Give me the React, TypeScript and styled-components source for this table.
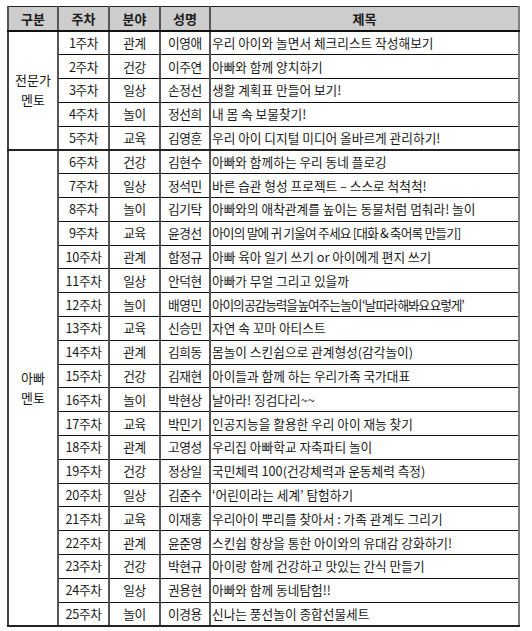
import React from 'react'
import styled, { createGlobalStyle } from 'styled-components'

const GlobalStyle = createGlobalStyle`
  html, body {
    margin: 0;
    padding: 0;
    background: #ffffff;
  }
  body {
    font-family: "Noto Sans CJK KR", "Noto Sans", sans-serif;
    color: #1a1a1a;
  }
`

const Page = styled.div`
  padding: 6px 0 0 7px;
`

const Table = styled.table`
  width: 513px;
  border-collapse: collapse;
  table-layout: fixed;
  font-size: 12.7px;
  border-top: 1px solid #222;
  border-bottom: 2px solid #222;
  border-left: 2px solid #444;
  border-right: 2px solid #808080;
`

const HeadCell = styled.th`
  height: 23px;
  padding: 0;
  background: #cdcdcd;
  font-weight: 700;
  font-size: 13px;
  text-align: center;
  border-bottom: 2px solid #111;
  border-left: 2px solid #555;
  color: #1a1a1a;
`

const Row = styled.tr<{ $groupEnd?: boolean }>`
  height: 23.8px;
  td {
    border-bottom: ${(p) => (p.$groupEnd ? '2px solid #222' : '1px solid #111')};
  }
`

const Cell = styled.td<{ $left?: boolean }>`
  padding: ${(p) => (p.$left ? '0 0 0 1px' : '0')};
  text-align: ${(p) => (p.$left ? 'left' : 'center')};
  border-left: 2px solid #555;
  white-space: nowrap;
  overflow: hidden;
  line-height: 20px;
  letter-spacing: ${(p) => (p.$left ? '0' : '-0.4px')};
`

const GroupCell = styled.td`
  padding: 0;
  text-align: center;
  vertical-align: middle;
  line-height: 20px;
  font-size: 13px;
  border-bottom: 2px solid #222 !important;
`

const Squeezed = styled.span<{ $letter: number; $word: number }>`
  letter-spacing: ${(p) => p.$letter}px;
  word-spacing: ${(p) => p.$word}px;
`

type Entry = [string, string, string]

const expert: Entry[] = [
  ['관계', '이영애', '우리 아이와 놀면서 체크리스트 작성해보기'],
  ['건강', '이주연', '아빠와 함께 양치하기'],
  ['일상', '손정선', '생활 계획표 만들어 보기!'],
  ['놀이', '정선희', '내 몸 속 보물찾기!'],
  ['교육', '김영훈', '우리 아이 디지털 미디어 올바르게 관리하기!'],
]

const dad: Entry[] = [
  ['건강', '김현수', '아빠와 함께하는 우리 동네 플로깅'],
  ['일상', '정석민', '바른 습관 형성 프로젝트 – 스스로 척척척!'],
  ['놀이', '김기탁', '아빠와의 애착관계를 높이는 동물처럼 멈춰라! 놀이'],
  ['교육', '윤경선', '아이의 말에 귀 기울여 주세요 [대화 & 축어록 만들기]'],
  ['관계', '함정규', '아빠 육아 일기 쓰기 or 아이에게 편지 쓰기'],
  ['일상', '안덕현', '아빠가 무얼 그리고 있을까'],
  ['놀이', '배영민', '아이의 공감능력을 높여주는 놀이 ‘날 따라 해봐요 요렇게’'],
  ['교육', '신승민', '자연 속 꼬마 아티스트'],
  ['관계', '김희동', '몸놀이 스킨쉽으로 관계형성(감각놀이)'],
  ['건강', '김재현', '아이들과 함께 하는 우리가족 국가대표'],
  ['놀이', '박현상', '날아라! 징검다리~~'],
  ['교육', '박민기', '인공지능을 활용한 우리 아이 재능 찾기'],
  ['관계', '고영성', '우리집 아빠학교 자축파티 놀이'],
  ['건강', '정상일', '국민체력 100(건강체력과 운동체력 측정)'],
  ['일상', '김준수', '‘어린이라는 세계’ 탐험하기'],
  ['교육', '이재홍', '우리아이 뿌리를 찾아서 : 가족 관계도 그리기'],
  ['관계', '윤준영', '스킨쉽 향상을 통한 아이와의 유대감 강화하기!'],
  ['건강', '박현규', '아이랑 함께 건강하고 맛있는 간식 만들기'],
  ['일상', '권용현', '아빠와 함께 동네탐험!!'],
  ['놀이', '이경용', '신나는 풍선놀이 종합선물세트'],
]

// a few titles are squeezed in the source document
const squeeze: Record<number, [number, number]> = {
  9: [-0.8, 0],
  12: [-1.15, -1],
}

function renderGroup(label: string[], rows: Entry[], startWeek: number) {
  return rows.map((r, i) => {
    const week = startWeek + i
    const s = squeeze[week]
    return (
      <Row key={week} $groupEnd={i === rows.length - 1}>
        {i === 0 && (
          <GroupCell rowSpan={rows.length}>
            {label[0]}
            <br />
            {label[1]}
          </GroupCell>
        )}
        <Cell>{week}주차</Cell>
        <Cell>{r[0]}</Cell>
        <Cell>{r[1]}</Cell>
        <Cell $left>
          {s ? (
            <Squeezed $letter={s[0]} $word={s[1]}>
              {r[2]}
            </Squeezed>
          ) : (
            r[2]
          )}
        </Cell>
      </Row>
    )
  })
}

export default function App() {
  return (
    <Page>
      <GlobalStyle />
      <Table>
        <colgroup>
          <col style={{ width: 50 }} />
          <col style={{ width: 51 }} />
          <col style={{ width: 51 }} />
          <col style={{ width: 50 }} />
          <col />
        </colgroup>
        <thead>
          <tr>
            <HeadCell>구분</HeadCell>
            <HeadCell>주차</HeadCell>
            <HeadCell>분야</HeadCell>
            <HeadCell>성명</HeadCell>
            <HeadCell>제목</HeadCell>
          </tr>
        </thead>
        <tbody>
          {renderGroup(['전문가', '멘토'], expert, 1)}
          {renderGroup(['아빠', '멘토'], dad, 6)}
        </tbody>
      </Table>
    </Page>
  )
}
